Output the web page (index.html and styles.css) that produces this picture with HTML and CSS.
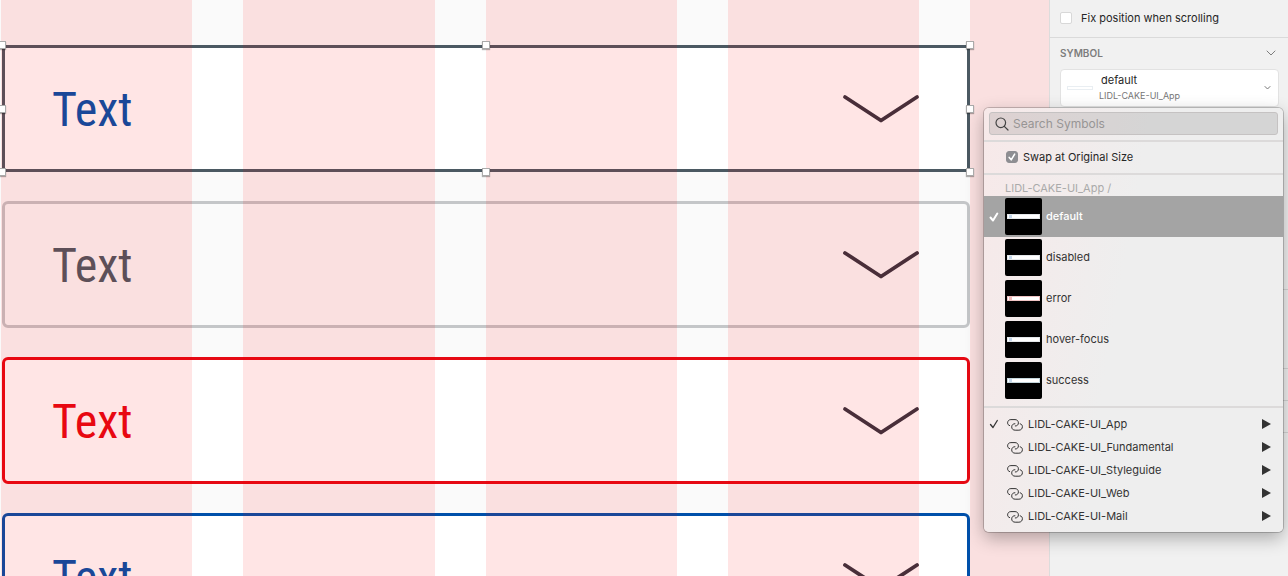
FILE: index.html
```
<!DOCTYPE html>
<html lang="en">
<head>
<meta charset="utf-8">
<title>Symbols</title>
<link rel="stylesheet" href="styles.css">
</head>
<body>
<svg class="defs" width="0" height="0" aria-hidden="true">
  <symbol id="chevron" viewBox="0 0 78 30"><path d="M3 3 39 26.500 75 3" fill="none" stroke="currentColor" stroke-width="3.800" stroke-linecap="round" stroke-linejoin="round"/></symbol>
  <symbol id="link" viewBox="0 0 16 12"><path d="M2.600 6.600C1.300 6.200.600 5.200.600 3.900.600 2 1.900.600 3.900.600H8C10 .600 11.400 1.900 11.400 3.900 11.400 5.800 10.200 7 8.300 7M13.200 4.800C14.600 5.200 15.400 6.200 15.400 7.600 15.400 9.700 14 11.200 11.900 11.200H8.200C6.100 11.200 4.700 9.900 4.700 7.900 4.700 6 6 4.700 7.900 4.700" fill="none" stroke="currentColor" stroke-width="1" stroke-linecap="round"/></symbol>
  <symbol id="tick" viewBox="0 0 10 10"><path d="M1.500 5.500 4 8.500 8.300 1.500" fill="none" stroke="currentColor" stroke-width="1.300" stroke-linecap="round" stroke-linejoin="round"/></symbol>
  <symbol id="tick-bold" viewBox="0 0 10 10"><path d="M1.500 5.500 4 8.500 8.300 1.500" fill="none" stroke="currentColor" stroke-width="2" stroke-linecap="round" stroke-linejoin="round"/></symbol>
  <symbol id="arrow" viewBox="0 0 9 10"><path d="M0 0 9 5 0 10Z" fill="currentColor"/></symbol>
</svg>
<div class="app">
  <main class="canvas">
    <div class="fields">
      <div class="field field-default"><span>Text</span><svg class="field-chevron"><use href="#chevron"/></svg>
        <div class="handles"><i></i><i></i><i></i><i></i><i class="void"></i><i></i><i></i><i></i><i></i></div>
      </div>
      <div class="field field-disabled"><span>Text</span><svg class="field-chevron"><use href="#chevron"/></svg></div>
      <div class="field field-error"><span>Text</span><svg class="field-chevron"><use href="#chevron"/></svg></div>
      <div class="field field-focus"><span>Text</span><svg class="field-chevron"><use href="#chevron"/></svg></div>
    </div>
    <div class="layout-grid"><i></i><i></i><i></i><i></i><i></i></div>
  </main>
  <aside class="inspector">
    <label class="fix"><input type="checkbox" class="box">Fix position when scrolling</label>
    <section class="symbol-section">
      <h2>SYMBOL <svg width="10" height="6" viewBox="0 0 10 6"><path d="M1 1 5 5 9 1" fill="none" stroke="currentColor" stroke-linecap="round"/></svg></h2>
      <button class="symbol-picker" type="button">
        <span class="preview"></span>
        <span class="picker-text"><span class="picker-name">default</span><span class="picker-lib">LIDL-CAKE-UI_App</span></span>
        <svg width="7" height="4" viewBox="0 0 7 4"><path d="M1 .500 3.500 3 6 .500" fill="none" stroke="currentColor" stroke-linecap="round"/></svg>
      </button>
    </section>
    <div class="override tall"></div>
    <div class="override wide"></div>
    <div class="override"></div>
    <div class="override"></div>
  </aside>
  <div class="popup">
    <label class="search"><svg width="14" height="14" viewBox="0 0 14 14"><g fill="none" stroke="currentColor" stroke-width="1.200" stroke-linecap="round"><circle cx="5.800" cy="5.800" r="4.800"/><path d="M9.300 9.300 13 13"/></g></svg><input type="text" placeholder="Search Symbols" aria-label="Search Symbols"></label>
    <label class="swap"><input type="checkbox" class="box" checked><svg class="box-tick"><use href="#tick-bold"/></svg>Swap at Original Size</label>
    <div class="states">
      <div class="path">LIDL-CAKE-UI_App /</div>
      <button type="button" class="state selected"><svg class="tick"><use href="#tick-bold"/></svg><span class="thumb"><i></i></span><span class="label">default</span></button>
      <button type="button" class="state"><span class="tick"></span><span class="thumb"><i></i></span><span class="label">disabled</span></button>
      <button type="button" class="state"><span class="tick"></span><span class="thumb thumb-error"><i></i></span><span class="label">error</span></button>
      <button type="button" class="state"><span class="tick"></span><span class="thumb"><i></i></span><span class="label">hover-focus</span></button>
      <button type="button" class="state"><span class="tick"></span><span class="thumb thumb-success"><i></i></span><span class="label">success</span></button>
    </div>
    <div class="libraries">
      <button type="button" class="library"><svg class="tick"><use href="#tick"/></svg><svg class="link"><use href="#link"/></svg><span class="label">LIDL-CAKE-UI_App</span><svg class="arrow"><use href="#arrow"/></svg></button>
      <button type="button" class="library"><span class="tick"></span><svg class="link"><use href="#link"/></svg><span class="label">LIDL-CAKE-UI_Fundamental</span><svg class="arrow"><use href="#arrow"/></svg></button>
      <button type="button" class="library"><span class="tick"></span><svg class="link"><use href="#link"/></svg><span class="label">LIDL-CAKE-UI_Styleguide</span><svg class="arrow"><use href="#arrow"/></svg></button>
      <button type="button" class="library"><span class="tick"></span><svg class="link"><use href="#link"/></svg><span class="label">LIDL-CAKE-UI_Web</span><svg class="arrow"><use href="#arrow"/></svg></button>
      <button type="button" class="library"><span class="tick"></span><svg class="link"><use href="#link"/></svg><span class="label">LIDL-CAKE-UI-Mail</span><svg class="arrow"><use href="#arrow"/></svg></button>
    </div>
  </div>
</div>
</body>
</html>
```
FILE: styles.css
```
* { box-sizing: border-box; }
body { margin: 0; font: 11px/16px Inter, "Liberation Sans", sans-serif; color: #262626; }
button, input { font: inherit; color: inherit; }
button { border: 0; background: none; padding: 0; text-align: left; }
svg { display: block; flex: none; }
.defs { position: absolute; }
.app { position: relative; display: flex; height: 100vh; overflow: hidden; }

.canvas { position: relative; flex: 1; background: #fafafa; overflow: hidden; }
.fields { display: flex; flex-direction: column; gap: 29px; padding: 45px 79px 0 2px; }
.field {
  position: relative; display: flex; align-items: center; justify-content: space-between;
  height: 127px; padding: 0 47px; flex: none;
  border: 3px solid; border-radius: 6px; background: #fff;
  font: 48px/60px "Roboto Condensed", "Liberation Sans Narrow", "Liberation Sans", sans-serif;
}
.field span { padding-top: 2px; }
.field-chevron { width: 78px; height: 30px; color: #353440; }
.field-default { border-color: #4b5962; color: #0050aa; border-radius: 3px; }
.field-disabled { border-color: #c4c6c8; color: #4b5962; background: #fafafa; }
.field-error { border-color: #e60a14; color: #e60a14; }
.field-focus { border-color: #0050aa; color: #0050aa; }
.layout-grid {
  position: absolute; inset: 0; padding-left: 1px;
  display: grid; grid-template-columns: repeat(4, 1fr) 79px; column-gap: 51px;
}
.layout-grid i { background: rgba(255, 0, 0, .1); }
.handles {
  position: absolute; inset: -7px; z-index: 2;
  display: grid; grid-template-columns: repeat(3, 8px); justify-content: space-between; align-content: space-between;
}
.handles i { width: 8px; height: 8px; background: #fff; border: 1px solid #aaa; box-shadow: 0 1px 1px rgba(0, 0, 0, .3); }
.handles .void { visibility: hidden; }

.inspector { width: 239px; background: #f1f1f1; border-left: 1px solid #dcdcdc; }
.fix { display: flex; align-items: center; gap: 9px; height: 37px; padding: 0 0 2px 10px; }
.box {
  appearance: none; width: 12px; height: 12px; margin: 0; flex: none;
  border: 1px solid #d8d8d8; border-radius: 2px; background: #fff;
}
.box:checked { border-color: #8e8e92; background: #8e8e92; border-radius: 3px; }
.symbol-section { padding: 0 9px 0 10px; border-top: 1px solid #dadada; }
.symbol-section h2 {
  display: flex; align-items: center; justify-content: space-between;
  margin: 0; height: 31px; padding: 0 3px 2px 0; font-size: 10px; font-weight: 600; color: #7d7d7d;
}
.symbol-picker {
  display: flex; align-items: center; width: 100%; height: 38px; padding: 0 7px 0 6px;
  border: 1px solid #e2e2e2; border-radius: 4px; background: #fff;
}
.symbol-picker svg { color: #777; }
.preview { width: 26px; height: 4px; border: 1px solid #e9eef2; }
.picker-text { flex: 1; display: flex; flex-direction: column; padding-left: 6px; line-height: 15px; }
.picker-name { padding-left: 2px; }
.picker-lib { font-size: 9px; color: #777; }
.override { height: 32px; border-bottom: 1px solid #d5d5d5; }
.override.tall { height: 183px; }
.override.wide { height: 79px; }

.popup {
  position: absolute; top: 108px; right: 5px; width: 299px; padding-top: 4px;
  border-radius: 5px; background: linear-gradient(100deg, #f7e9e9, #eee 45%); overflow: hidden;
  box-shadow: 0 0 0 1px rgba(0, 0, 0, .2), 0 6px 18px rgba(0, 0, 0, .3);
}
.search {
  display: flex; align-items: center; gap: 4px; height: 23px; margin: 0 5px 5px; padding: 0 5px;
  border: 1px solid #c5c2c2; border-radius: 3px; background: rgba(0, 0, 0, .1); color: #444;
}
.search input { flex: 1; min-width: 0; padding: 0; border: 0; background: none; outline: 0; font-size: 12px; }
.search input::placeholder { color: #979595; opacity: 1; }
.swap {
  position: relative; display: flex; align-items: center; gap: 5px; height: 33px; padding: 0 0 1px 22px;
  border-top: 2px solid #dcdada;
}
.box-tick { position: absolute; left: 24px; width: 8px; height: 8px; color: #fff; }
.states { padding-bottom: 5px; border-top: 2px solid #dcdada; border-bottom: 2px solid #dcdada; }
.path { height: 21px; padding-left: 21px; line-height: 26px; color: #aaa; }
.state { display: flex; align-items: center; width: 100%; height: 41px; color: #333; }
.label { padding-bottom: 2px; }
.tick { width: 10px; height: 10px; margin: 0 6px 0 5px; flex: none; }
.thumb { display: flex; align-items: center; width: 37px; height: 37px; margin-right: 4px; padding: 0 2px; border-radius: 2px; background: #000; }
.thumb i { flex: 1; height: 5px; border: 1px solid #e4e7ea; background: linear-gradient(90deg, #fff 1px, #c5d8ec 1px 4px, #fff 4px); }
.thumb-error i { border-color: #f0c4c4; background: linear-gradient(90deg, #fff 1px, #f3bcbc 1px 4px, #fff 4px); }
.thumb-success i { border-color: #c5d6dc; }
.selected { background: #a4a4a4; color: #fff; font-weight: 500; }
.libraries { padding: 5px 0 4px; }
.library { display: flex; align-items: center; width: 100%; height: 23px; padding-right: 12px; color: #333; }
.library .label { flex: 1; }
.library svg { margin-bottom: 1px; }
.library .link { width: 16px; height: 12px; margin: 0 5px 0 2px; }
.arrow { width: 9px; height: 10px; }
```
